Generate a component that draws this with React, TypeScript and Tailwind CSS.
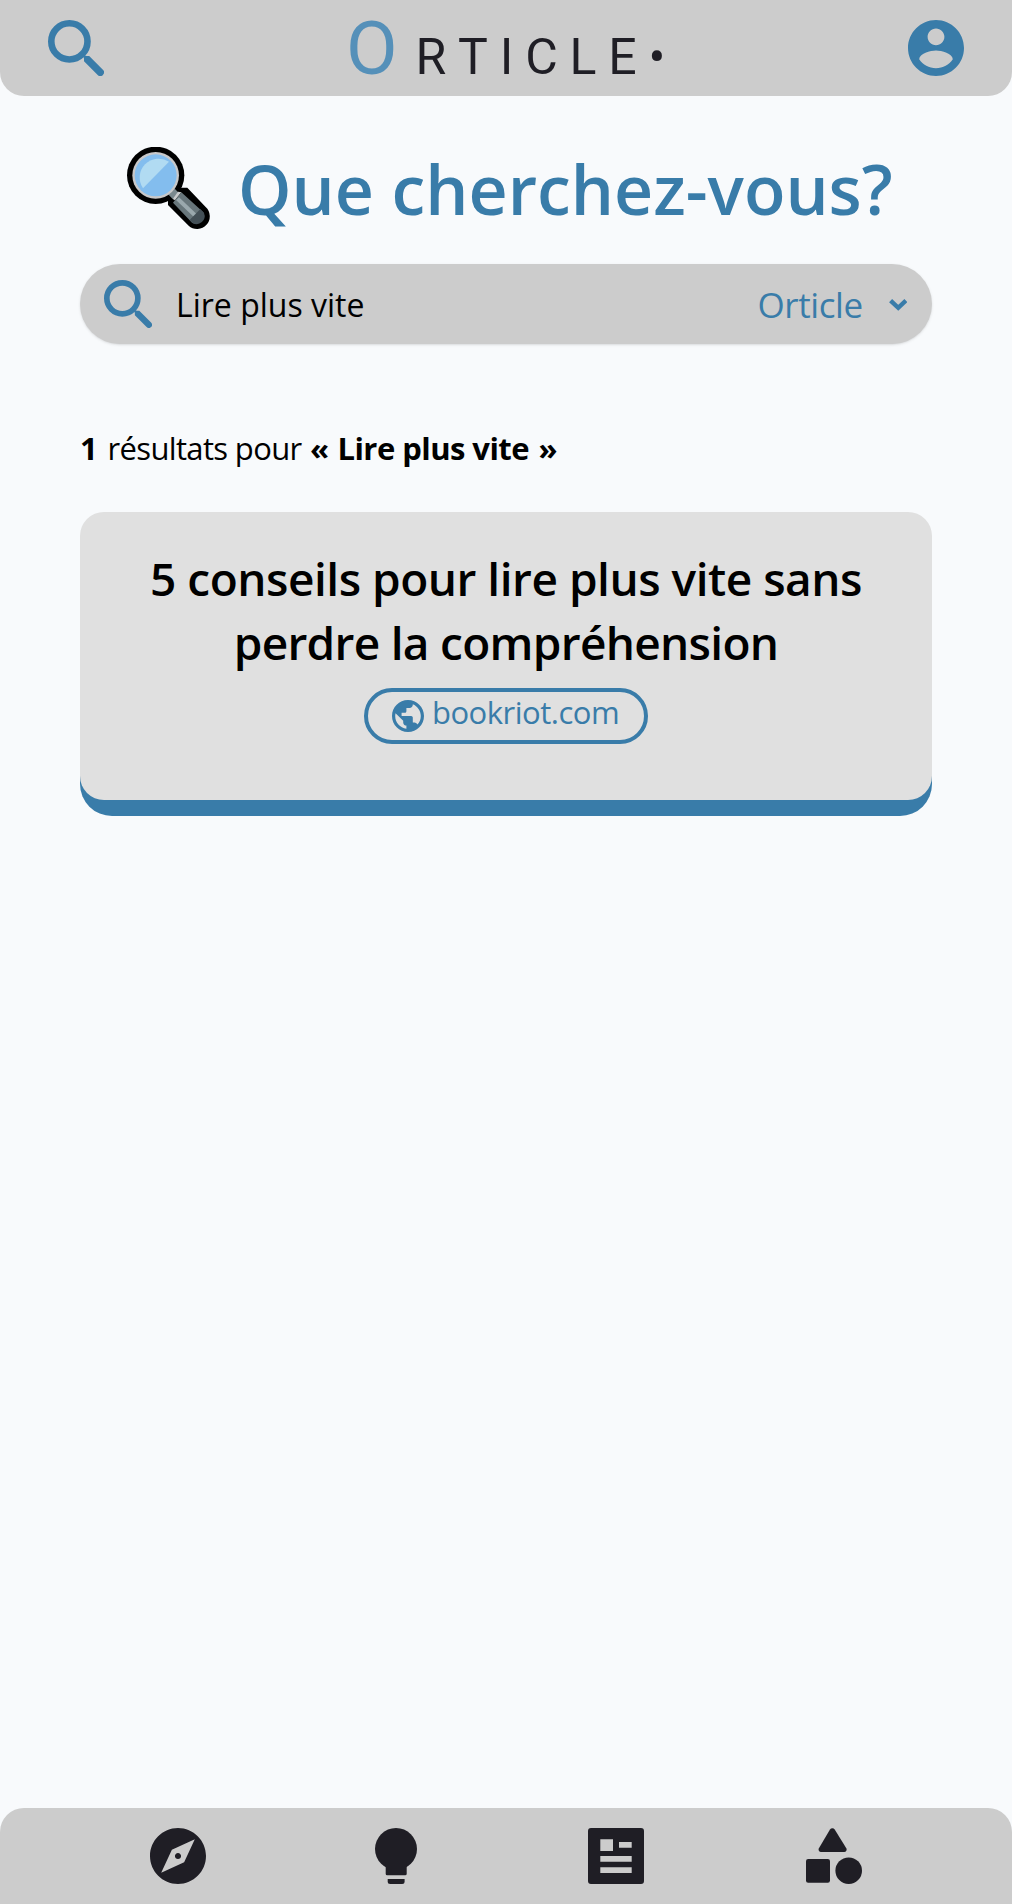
import type { ReactNode } from "react";

function SearchIcon({ className }: { className: string }) {
  return (
    <svg viewBox="0 0 56 56" className={className} fill="none">
      <circle cx="21.4" cy="21.4" r="18.1" stroke="currentColor" strokeWidth="6.6" />
      <path
        d="M36 38.5 L34.6 34.8 L38.5 36 H41.2 L54.9 49.7 A3.65 3.65 0 0 1 49.7 54.9 L36 41.2 Z"
        fill="currentColor"
      />
    </svg>
  );
}

function AccountIcon() {
  return (
    <svg viewBox="2 2 20 20" className="size-14" fill="currentColor">
      <path d="M12 2C6.48 2 2 6.48 2 12s4.48 10 10 10 10-4.48 10-10S17.52 2 12 2zm0 3c1.66 0 3 1.34 3 3s-1.34 3-3 3-3-1.34-3-3 1.34-3 3-3zm0 14.2c-2.5 0-4.71-1.28-6-3.22.03-1.99 4-3.08 6-3.08 1.99 0 5.97 1.09 6 3.08-1.29 1.94-3.5 3.22-6 3.22z" />
    </svg>
  );
}

function GlobeIcon() {
  return (
    <svg viewBox="2 2 20 20" className="size-8 shrink-0" fill="currentColor">
      <path d="M12 2C6.48 2 2 6.48 2 12s4.48 10 10 10 10-4.48 10-10S17.52 2 12 2zm-1 17.93c-3.95-.49-7-3.85-7-7.93 0-.62.08-1.21.21-1.79L9 15v1c0 1.1.9 2 2 2v1.93zm6.9-2.54c-.26-.81-1-1.39-1.9-1.39h-1v-3c0-.55-.45-1-1-1H8v-2h2c.55 0 1-.45 1-1V7h2c1.1 0 2-.9 2-2v-.41c2.93 1.19 5 4.06 5 7.41 0 2.08-.8 3.97-2.1 5.39z" />
    </svg>
  );
}

function Magnifier() {
  return (
    <svg viewBox="0 0 248 246" className="h-[82px] w-[82.67px] shrink-0">
      <path
        d="M150 122 H181 L236 180 A37 37 0 0 1 185 236 L123 174 V150 Z"
        fill="#000"
        strokeLinejoin="round"
      />
      <circle cx="86" cy="85" r="86" fill="#000" />
      <path d="M122 140 L141 123 L155 137 L137 156 Z" fill="#7b898e" />
      <path d="M153 134 L163 136 L144 160 L137 156 Z" fill="#c9cbcc" />
      <path d="M163 136 L229 196 A25 25 0 0 1 196 228 L138 167 Z" fill="#68767b" />
      <path d="M156 151 L215 207 L207 216 L147 159 Z" fill="#9aa8ad" />
      <path d="M220 186 L231 198 A24 24 0 0 1 197 228 L188 219 Z" fill="#434f56" />
      <circle cx="86" cy="85" r="70" fill="#c8c8c9" />
      <circle cx="86" cy="85" r="63" fill="#83bdee" />
      <path d="M126 44 A57 57 0 0 0 48 124 Z" fill="#b1dbf2" />
    </svg>
  );
}

function NavIcon({ children, className }: { children: ReactNode; className: string }) {
  return (
    <svg viewBox="0 0 56 56" className={`size-14 shrink-0 ${className}`} fill="currentColor">
      {children}
    </svg>
  );
}

export default function App() {
  return (
    <div className="flex h-[1904px] w-[1012px] flex-col bg-slate-50 font-['Open_Sans',sans-serif] whitespace-nowrap text-black">
      <header className="grid h-24 shrink-0 grid-cols-[1fr_auto_1fr] items-center rounded-b-3xl bg-[#ccc] px-12 text-[#397ca9]">
        <SearchIcon className="size-14" />
        <div className="flex h-24 w-[320px] items-baseline font-['Roboto',sans-serif] text-[#1f1e25]">
          <span className="w-[69.5px] shrink-0 text-[75px] leading-[96px] text-[#5590b9]">O</span>
          <span className="text-[50px] leading-none tracking-[11.8px] [font-kerning:none]">RTICLE•</span>
        </div>
        <div className="flex justify-end">
          <AccountIcon />
        </div>
      </header>

      <main className="flex-1 px-20 pt-10">
        <h1 className="flex h-[104px] items-center pl-[47.3px] text-[68px] leading-none font-semibold text-[#397ca9]">
          <Magnifier />
          <span className="mt-0.5 ml-[28px]">Que cherchez-vous?</span>
        </h1>

        <div className="mt-6 flex h-20 items-center rounded-full bg-[#ccc] pr-[25px] pl-6 shadow-sm">
          <SearchIcon className="size-12 shrink-0 text-[#397ca9]" />
          <span className="mt-0.5 ml-[24px] text-[32px] leading-none">Lire plus vite</span>
          <div className="ml-auto flex items-center text-[#397ca9]">
            <span className="w-[131px] text-[35px] leading-none tracking-[-0.4px]">Orticle</span>
            <svg viewBox="0 0 18.5 12" className="mt-0.5 h-3 w-[18.5px]" fill="none">
              <path d="M1.6 1.6 L9.25 8.8 L16.9 1.6" stroke="currentColor" strokeWidth="4.4" />
            </svg>
          </div>
        </div>

        <p className="mt-[84px] flex h-10 items-center text-[31px] leading-none">
          <b className="w-[27.5px]">1</b>
          <span className="w-[202.5px] tracking-[-0.65px]">résultats pour</span>
          <b className="w-[27.5px] tracking-tight">«</b>
          <b className="w-[201px] tracking-[-0.55px]">Lire plus vite</b>
          <b>»</b>
        </p>

        <div className="mt-11 rounded-[32px] bg-[#397ca9] pb-4">
          <article className="flex h-72 flex-col items-center rounded-3xl bg-[#e0e0e0] pt-[34px]">
            <h2 className="text-center text-[46px] leading-[64px] font-semibold tracking-[-0.48px]">
              5 conseils pour lire plus vite sans
              <br />
              <span className="tracking-[-0.7px]">perdre la compréhension</span>
            </h2>
            <div className="mt-3.5 flex h-14 w-[284px] items-center rounded-full border-4 border-[#397ca9] pl-6 text-[#397ca9]">
              <GlobeIcon />
              <span className="ml-2 self-start text-[31px] leading-[41px] tracking-[-0.5px]">bookriot.com</span>
            </div>
          </article>
        </div>
      </main>

      <nav className="flex h-24 shrink-0 items-center rounded-t-3xl bg-[#ccc] pl-[150px] text-[#1f1e25]">
        <NavIcon className="">
          <path
            transform="scale(2.8) translate(-2 -2)"
            d="M12 10.9c-.61 0-1.1.49-1.1 1.1s.49 1.1 1.1 1.1c.61 0 1.1-.49 1.1-1.1s-.49-1.1-1.1-1.1zM12 2C6.48 2 2 6.48 2 12s4.48 10 10 10 10-4.48 10-10S17.52 2 12 2zm2.19 12.19L6 18l3.81-8.19L18 6l-3.81 8.19z"
          />
        </NavIcon>
        <NavIcon className="ml-[162px]">
          <circle cx="28" cy="21" r="21" />
          <path d="M17.7 34 H38.7 V45.8 a1.5 1.5 0 0 1 -1.5 1.5 H19.2 a1.5 1.5 0 0 1 -1.5 -1.5 Z" />
          <path d="M19.7 51 H36.6 V53.5 a2.5 2.5 0 0 1 -2.5 2.5 H22.2 a2.5 2.5 0 0 1 -2.5 -2.5 Z" />
        </NavIcon>
        <NavIcon className="ml-[164px]">
          <path
            fillRule="evenodd"
            d="M3 0H53a3 3 0 0 1 3 3V53a3 3 0 0 1-3 3H3a3 3 0 0 1-3-3V3a3 3 0 0 1 3-3ZM12.3 11.2V22.9H25V11.2ZM31 14V19.7H43.7V14ZM12.3 28V33.8H43.7V28ZM12.3 39.2V45H43.7V39.2Z"
          />
        </NavIcon>
        <NavIcon className="ml-[162px]">
          <path d="M24 1.5a2.8 2.8 0 0 1 4.7 0L40.3 20.3a2.5 2.5 0 0 1-2.1 3.7H15a2.5 2.5 0 0 1-2.1-3.7Z" />
          <rect x="0" y="31" width="24" height="23.8" rx="2.2" />
          <circle cx="42.7" cy="42.7" r="13.3" />
        </NavIcon>
      </nav>
    </div>
  );
}
